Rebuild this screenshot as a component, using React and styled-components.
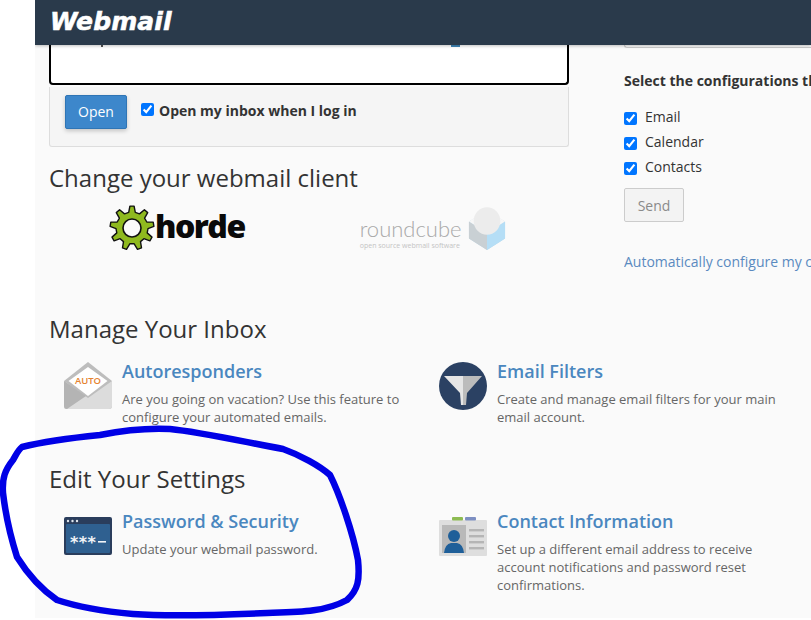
import React from 'react'
import styled, { createGlobalStyle } from 'styled-components'

const GlobalStyle = createGlobalStyle`
html, body {
    margin: 0;
    padding: 0;
    background: #fff;
    overflow: hidden;
}
body {
    font-family: "Open Sans", "Liberation Sans", sans-serif;
    font-size: 14px;
    color: #333;
}
`

function gearPath(cx, cy, outer, inner, teeth) {
    const step = (Math.PI * 2) / teeth
    const pts = []
    for (let i = 0; i < teeth; i++) {
        const a = i * step - Math.PI / 2
        const w = step * 0.2
        const near = step * 0.3
        pts.push([a - near, inner], [a - w * 0.7, outer], [a + w * 0.7, outer], [a + near, inner])
    }
    return 'M' + pts.map(([a, r]) => `${(cx + Math.cos(a) * r).toFixed(1)} ${(cy + Math.sin(a) * r).toFixed(1)}`).join('L') + 'Z'
}

function HordeLogo() {
    return (
        <Horde>
            <svg width="46" height="46" viewBox="0 0 46 46">
                <path d={gearPath(23, 23, 22, 16, 9)} fill="#8fb91f" stroke="#111" strokeWidth="1.4" strokeLinejoin="round" />
                <circle cx="23" cy="23" r="9" fill="#fafafa" stroke="#111" strokeWidth="1.6" />
            </svg>
            <HordeName>horde</HordeName>
        </Horde>
    )
}

function RoundcubeLogo() {
    return (
        <Roundcube>
            <div>
                <RoundcubeName>roundcube</RoundcubeName>
                <RoundcubeTag>open source webmail software</RoundcubeTag>
            </div>
            <svg width="38" height="44" viewBox="0 0 40 46">
                <path d="M1 15 L20 4 L39 15 V33 L20 45 L1 33 Z" fill="#bcd9ea" />
                <path d="M1 15 L20 27 V45 L1 33 Z" fill="#c9d0d4" />
                <path d="M39 15 L20 27 V45 L39 33 Z" fill="#b5def6" />
                <path d="M1 15 L20 27 L39 15 L30 9 H10 Z" fill="#f7f7f7" />
                <ellipse cx="20" cy="14.5" rx="14" ry="14.5" fill="#ececec" />
            </svg>
        </Roundcube>
    )
}

function AutoIcon() {
    return (
        <svg width="48" height="48" viewBox="0 0 48 48">
            <path d="M24 0 L48 19 V44 Q48 47 45 47 H3 Q0 47 0 44 V19 Z" fill="#bdbdbd" />
            <path d="M4.5 19 L24 5 L43.5 19 L24 34 Z" fill="#fff" />
            <path d="M0 45 V19 L24 36 L48 19 V44 Q48 47 45 47 H3 Q0 47 0 45 Z" fill="#dcdcdc" />
            <path d="M0 19 L22 34 L3 47 Q0 47 0 44 Z" fill="#b4b4b4" />
            <text x="24" y="22" textAnchor="middle" fontFamily="Open Sans" fontWeight="600" fontSize="9.5" fill="#e5832f">AUTO</text>
        </svg>
    )
}

function FilterIcon() {
    return (
        <svg width="48" height="48" viewBox="0 0 48 48">
            <circle cx="24" cy="24" r="24" fill="#2b4163" />
            <path d="M5 14 H24 V43 H22 L21 31 Z" fill="#e6e6e6" />
            <path d="M24 14 H43 L28 31 L27 43 H24 Z" fill="#bcbcbc" />
        </svg>
    )
}

function PasswordIcon() {
    return (
        <svg width="48" height="38" viewBox="0 0 48 38">
            <rect width="48" height="38" rx="2" fill="#2a3d5c" />
            <rect x="2" y="7" width="44" height="29" rx="1" fill="#2f6090" />
            <circle cx="4" cy="4" r="1.2" fill="#dfe6ee" />
            <circle cx="8.5" cy="4" r="1.2" fill="#dfe6ee" />
            <circle cx="13" cy="4" r="1.2" fill="#dfe6ee" />
            <text x="6" y="31" fontFamily="DejaVu Sans" fontWeight="700" fontSize="16" letterSpacing="0.4" fill="#f2f5f8">***</text>
            <rect x="34" y="24" width="8" height="1.6" fill="#f2f5f8" />
        </svg>
    )
}

function ContactIcon() {
    return (
        <svg width="48" height="39" viewBox="0 0 48 39">
            <rect y="3" width="48" height="36" rx="1" fill="#dedede" />
            <rect x="13" y="0" width="11" height="3.5" rx="1" fill="#8dbb52" />
            <rect x="26" y="0" width="11" height="3.5" rx="1" fill="#7d8fc2" />
            <rect x="3" y="8" width="24" height="28" fill="#b9b9b9" />
            <circle cx="15" cy="19" r="6" fill="#1f5f99" />
            <path d="M5 36 Q6 27 12 26 H18 Q24 27 25 36 Z" fill="#1f5f99" />
            <rect x="30" y="12" width="15" height="2.4" fill="#b5b5b5" />
            <rect x="30" y="18" width="15" height="2.4" fill="#b5b5b5" />
            <rect x="30" y="24" width="15" height="2.4" fill="#b5b5b5" />
            <rect x="30" y="30" width="15" height="2.4" fill="#b5b5b5" />
        </svg>
    )
}

function Feature({ icon, title, children }) {
    return (
        <Item>
            <IconCell>{icon}</IconCell>
            <div>
                <ItemTitle>{title}</ItemTitle>
                <ItemText>{children}</ItemText>
            </div>
        </Item>
    )
}

function Scribble() {
    const d = 'M22 447 C50 440 80 437 100 435 C125 430 150 428 170 429 C200 432 240 441 283 449 C300 455 320 466 330 475 C340 495 353 533 358 560 C360 580 358 590 347 600 C325 612 300 612 267 613 C200 616 160 616 133 614 C100 611 75 606 57 600 C35 585 22 565 17 557 C10 535 5 510 3 493 C2 478 5 470 13 460 C16 455 18 450 22 447 Z'
    return (
        <Overlay viewBox="0 0 811 620">
            <path d={d} fill="none" stroke="#0000e6" strokeWidth="6.5" strokeLinejoin="round" />
        </Overlay>
    )
}

function App() {
    return (
        <>
            <GlobalStyle />
            <Page>
                <Header>
                    <Logo>Webmail</Logo>
                </Header>
                <TopRow>
                    <div>
                        <Preview>
                            <Mark />
                            <Mark $blue />
                        </Preview>
                        <OpenPanel>
                            <OpenButton>Open</OpenButton>
                            <CheckLabel $bold>
                                <input type="checkbox" defaultChecked />
                                Open my inbox when I log in
                            </CheckLabel>
                        </OpenPanel>
                        <ClientHeading>Change your webmail client</ClientHeading>
                        <Logos>
                            <HordeLogo />
                            <RoundcubeLogo />
                        </Logos>
                    </div>
                    <Side>
                        <InputStub />
                        <SideTitle>Select the configurations that you would like to send to your email:</SideTitle>
                        <CheckList>
                            <CheckLabel><input type="checkbox" defaultChecked />Email</CheckLabel>
                            <CheckLabel><input type="checkbox" defaultChecked />Calendar</CheckLabel>
                            <CheckLabel><input type="checkbox" defaultChecked />Contacts</CheckLabel>
                        </CheckList>
                        <SendButton disabled>Send</SendButton>
                        <SideLink>Automatically configure my calendar and contacts client</SideLink>
                    </Side>
                </TopRow>
                <Section>
                    <SectionHeading>Manage Your Inbox</SectionHeading>
                    <Features>
                        <Feature icon={<AutoIcon />} title="Autoresponders">
                            Are you going on vacation? Use this feature to configure your automated emails.
                        </Feature>
                        <Feature icon={<FilterIcon />} title="Email Filters">
                            Create and manage email filters for your main email account.
                        </Feature>
                    </Features>
                </Section>
                <Section $tight>
                    <SectionHeading>Edit Your Settings</SectionHeading>
                    <Features>
                        <Feature icon={<PasswordIcon />} title="Password &amp; Security">
                            Update your webmail password.
                        </Feature>
                        <Feature icon={<ContactIcon />} title="Contact Information">
                            Set up a different email address to receive account notifications and password reset confirmations.
                        </Feature>
                    </Features>
                </Section>
            </Page>
            <Scribble />
        </>
    )
}

export default App

const Page = styled.div`
margin-left: 35px;
width: 776px;
height: 618px;
background: #fafafa;
overflow: hidden;
`

const Header = styled.div`
height: 45px;
background: #2a3a4b;
padding-left: 15px;
display: flex;
align-items: center;
box-shadow: 0 1px 3px rgb(0 0 0 / 25%);
position: relative;
z-index: 1;
`

const Logo = styled.div`
font-family: "DejaVu Sans", sans-serif;
font-weight: 700;
font-style: italic;
font-size: 25px;
letter-spacing: 0.1px;
color: #fff;
-webkit-text-stroke: 0.6px #fff;
transform: translateY(-1px);
`

const TopRow = styled.div`
display: grid;
grid-template-columns: 520px 1fr;
column-gap: 55px;
padding-left: 14px;
white-space: nowrap;
`

const Preview = styled.div`
height: 38px;
background: #fff;
border: 2px solid #000;
border-top: none;
border-radius: 0 0 4px 4px;
display: flex;
align-items: flex-start;
padding-left: 50px;
gap: 348px;
`

const Mark = styled.span`
width: ${props => (props.$blue ? '9px' : '2px')};
height: 2px;
background: ${props => (props.$blue ? '#3f86b8' : '#555')};
`

const OpenPanel = styled.div`
height: 60px;
box-sizing: border-box;
margin-top: 2px;
background: #f5f5f5;
border: 1px solid #ddd;
border-top: none;
border-radius: 0 0 3px 3px;
padding: 0 15px 10px;
display: flex;
align-items: center;
gap: 14px;
`

const OpenButton = styled.button`
width: 62px;
height: 34px;
background: #3d87cb;
border: 1px solid #2f75b5;
border-radius: 2px;
box-shadow: 0 2px 4px rgb(0 0 0 / 20%);
color: #fff;
font: 14px "Open Sans", sans-serif;
padding: 0;
`

const CheckLabel = styled.label`
display: flex;
align-items: center;
font-weight: ${props => (props.$bold ? 700 : 400)};
color: #333;
line-height: 20px;
margin-bottom: ${props => (props.$bold ? '2px' : '0')};

input {
    margin: ${props => (props.$bold ? '0 5px 2px 0' : '4px 8px 0 0')};
    width: 13px;
    height: 13px;
}
`

const ClientHeading = styled.h2`
margin: 17px 0 0;
font-size: 24px;
font-weight: 400;
line-height: 28px;
color: #333;
`

const Logos = styled.div`
display: flex;
align-items: flex-end;
padding-left: 60px;
margin-top: 13px;
gap: 115px;
`

const Horde = styled.div`
display: flex;
align-items: center;
`

const HordeName = styled.div`
font-family: "Open Sans", sans-serif;
font-weight: 800;
font-size: 32px;
line-height: 46px;
letter-spacing: -1.5px;
color: #0a0a0a;
margin-top: -4px;
`

const Roundcube = styled.div`
display: flex;
align-items: flex-end;
gap: 6px;
`

const RoundcubeName = styled.div`
font-family: "Lato", sans-serif;
font-weight: 300;
font-size: 22px;
line-height: 24px;
color: #a9a9a9;
`

const RoundcubeTag = styled.div`
font-family: "Open Sans", sans-serif;
font-size: 7px;
line-height: 10px;
color: #c4c4c4;
`

const Side = styled.div`
overflow: hidden;
`

const InputStub = styled.div`
height: 2px;
border: 1px solid #ccc;
border-top: none;
border-right: none;
border-radius: 0 0 0 4px;
margin-right: -4px;
`

const SideTitle = styled.div`
margin-top: 23px;
font-weight: 700;
line-height: 20px;
`

const CheckList = styled.div`
margin-top: 13px;
display: grid;
grid-auto-rows: 25px;
align-items: center;
`

const SendButton = styled.button`
display: block;
margin-top: 9px;
width: 60px;
height: 34px;
background: #f3f3f3;
border: 1px solid #ccc;
border-radius: 2px;
color: #8a8a8a;
font: 14px "Open Sans", sans-serif;
padding: 0;
`

const SideLink = styled.div`
margin-top: 30px;
line-height: 20px;
color: #5a8ac0;
`

const Section = styled.div`
padding-left: 14px;
margin-top: ${props => (props.$tight ? '39px' : '43px')};
`

const SectionHeading = styled.h2`
margin: 0;
font-size: 24px;
font-weight: 400;
line-height: 28px;
color: #333;
`

const Features = styled.div`
display: grid;
grid-template-columns: 375px 1fr;
margin-top: 15px;
`

const Item = styled.div`
display: flex;
padding-left: 15px;
gap: 10px;
`

const IconCell = styled.div`
flex: none;
width: 48px;
height: 48px;
margin-top: 4px;
display: flex;
align-items: center;
line-height: 0;
`

const ItemTitle = styled.div`
font-size: 18px;
font-weight: 600;
line-height: 26px;
color: #4a87bf;
`

const ItemText = styled.div`
margin-top: 6px;
font-size: 13px;
line-height: 18px;
color: #666;
width: 290px;
`

const Overlay = styled.svg`
position: absolute;
top: 0;
left: 0;
width: 811px;
height: 620px;
pointer-events: none;
`
